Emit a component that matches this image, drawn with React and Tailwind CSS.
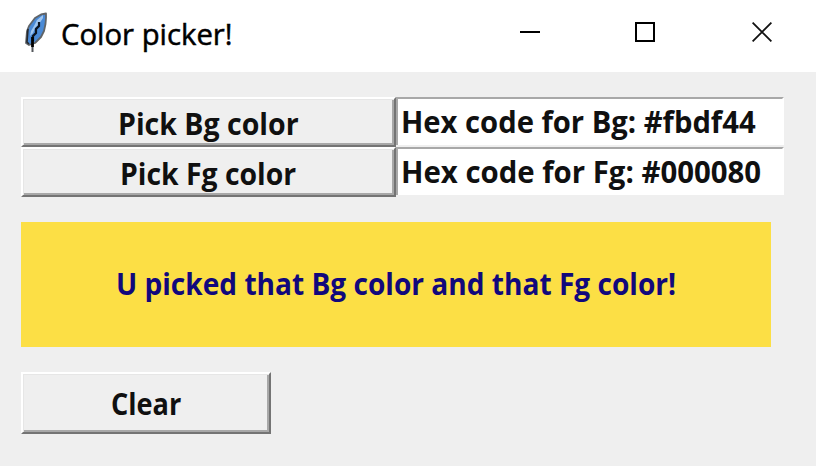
function Feather() {
  return (
    <svg className="h-[42px] w-[26px] shrink-0" viewBox="0 0 26 42" fill="none">
      <path d="M22 1.5 L17 2.5 L11 6 L8 10 L5 14 L3 19 L2 31 L5 33 L11 31 L17 25 L20 19 L21.5 12 L22 6 Z" fill="#4a8ad6" stroke="#606468" strokeWidth="1.8" strokeLinejoin="round" />
      <path d="M19 3 L13 8 L10 14 L7 19 L6 24 L9 21 L11 16 L15 12 L19 6 Z" fill="#9fc5ef" />
      <path d="M15 10 V14 L12 17 V21 L9 24 V29" stroke="#0c1420" strokeWidth="2.2" />
      <path d="M4 17 L3 30 L5 32" stroke="#25282d" strokeWidth="1.6" />
      <path d="M8.5 25 V35" stroke="#000" strokeWidth="2.8" />
      <path d="M8.5 35 V40" stroke="#55585c" strokeWidth="2" />
    </svg>
  );
}

function PushButton({ className, children }) {
  return (
    <button
      className={`flex items-center border-t-2 border-l-2 border-r-2 border-b-2 border-t-white border-l-white border-r-[#747474] border-b-[#747474] bg-[#efefef] shadow-[inset_1px_1px_0_#e6e6e6,inset_-2px_-2px_0_#a8a8a8] ${className}`}
    >
      {children}
    </button>
  );
}

function HexField({ children }) {
  return (
    <div className="h-12 w-[388px] border-t-2 border-r-2 border-l-2 border-t-[#a8a8a8] border-r-white border-l-[#a8a8a8] bg-white pl-[3px] leading-[44px]">
      {children}
    </div>
  );
}

export default function App() {
  return (
    <div className="h-[466px] w-[816px] overflow-hidden bg-[#efefef] font-['Open_Sans','Noto_Sans',sans-serif] text-[31px] font-bold whitespace-nowrap text-[#101010]">
      <header className="flex h-[72px] items-start bg-white pt-3 pl-[24px] text-black">
        <Feather />
        <h1 className="ml-[11px] w-[459px] text-[29px] leading-[44px] font-normal [-webkit-text-stroke:0.5px_black]">
          <span className="inline-block origin-left scale-x-[1.01]">Color picker!</span>
        </h1>
        <div className="flex pt-[10px]">
          <svg className="h-5 w-5" viewBox="0 0 20 20"><path d="M0 10H20" stroke="#000" strokeWidth="2" /></svg>
          <svg className="ml-[95px] h-5 w-5" viewBox="0 0 20 20"><path d="M1 1H19V19H1Z" fill="none" stroke="#000" strokeWidth="2" /></svg>
          <svg className="ml-[97px] h-5 w-5" viewBox="0 0 20 20"><path d="M.6.6 19.4 19.4M19.4.6.6 19.4" stroke="#111" strokeWidth="1.8" /></svg>
        </div>
      </header>

      <main className="pt-[25px] pl-[21px]">
        <div className="flex h-[50px]">
          <PushButton className="h-[50px] w-[375px] pt-[2px] pl-[95px]">
            <span className="inline-block origin-left scale-x-[0.92]">Pick Bg color</span>
          </PushButton>
          <HexField>
            <span className="inline-block origin-left scale-x-[0.942]">Hex code for Bg: #fbdf44</span>
          </HexField>
        </div>
        <div className="flex h-[50px]">
          <PushButton className="h-[50px] w-[375px] pt-[2px] pl-[97px]">
            <span className="inline-block origin-left scale-x-[0.915]">Pick Fg color</span>
          </PushButton>
          <HexField>
            <span className="inline-block origin-left scale-x-[0.947]">Hex code for Fg: #000080</span>
          </HexField>
        </div>
        <div className="mt-[25px] flex h-[125px] w-[750px] items-center bg-[#fcdf45] pb-[2px] pl-[95px] text-[#11087c]">
          <span className="inline-block origin-left scale-x-[0.906]">U picked that Bg color and that Fg color!</span>
        </div>
        <PushButton className="mt-[25px] h-[62px] w-[250px] pl-[88px]">
          <span className="inline-block origin-left scale-x-[0.875]">Clear</span>
        </PushButton>
      </main>
    </div>
  );
}
